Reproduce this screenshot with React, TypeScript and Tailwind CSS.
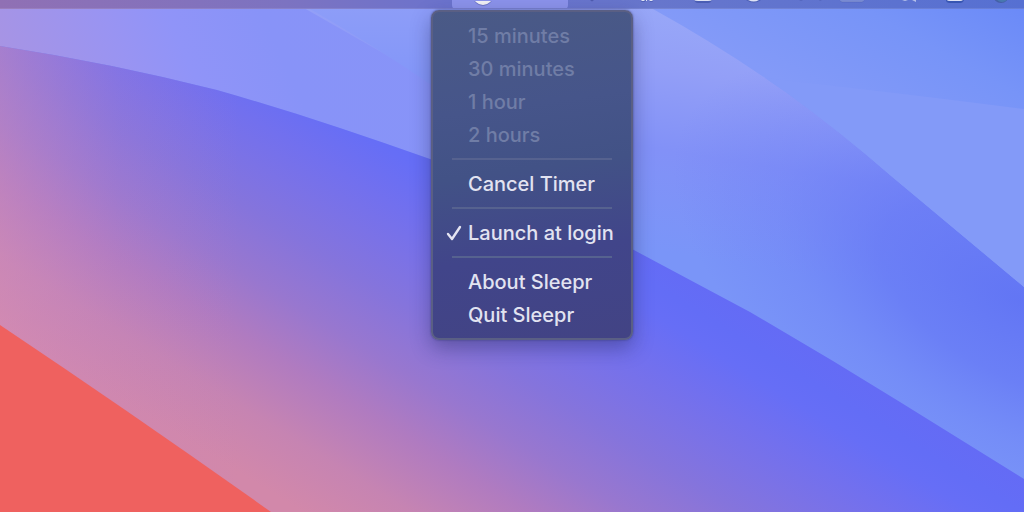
import type { ReactNode } from 'react';

type MenuEntry =
  | { kind: 'item'; label: string; disabled?: boolean; checked?: boolean }
  | { kind: 'separator' };

const entries: MenuEntry[] = [
  { kind: 'item', label: '15 minutes', disabled: true },
  { kind: 'item', label: '30 minutes', disabled: true },
  { kind: 'item', label: '1 hour', disabled: true },
  { kind: 'item', label: '2 hours', disabled: true },
  { kind: 'separator' },
  { kind: 'item', label: 'Cancel Timer' },
  { kind: 'separator' },
  { kind: 'item', label: 'Launch at login', checked: true },
  { kind: 'separator' },
  { kind: 'item', label: 'About Sleepr' },
  { kind: 'item', label: 'Quit Sleepr' },
];

function Wallpaper() {
  return (
    <svg
      className="absolute inset-0 -z-10 h-full w-full"
      viewBox="0 0 1024 512"
      preserveAspectRatio="xMidYMid slice"
      aria-hidden="true"
    >
      <defs>
        <linearGradient id="body" gradientUnits="userSpaceOnUse" x1="0" y1="325" x2="216" y2="-24">
          <stop offset="0" stopColor="#d288aa" />
          <stop offset="0.14" stopColor="#c684b2" />
          <stop offset="0.29" stopColor="#b07bc0" />
          <stop offset="0.42" stopColor="#9877cf" />
          <stop offset="0.56" stopColor="#8574dc" />
          <stop offset="0.66" stopColor="#7b72e6" />
          <stop offset="0.75" stopColor="#7270ee" />
          <stop offset="0.86" stopColor="#666ef6" />
          <stop offset="0.92" stopColor="#636df6" />
          <stop offset="1" stopColor="#646bf5" />
        </linearGradient>
        <linearGradient id="bodyLeft" gradientUnits="userSpaceOnUse" x1="0" y1="0" x2="240" y2="0">
          <stop offset="0" stopColor="#d08cbc" stopOpacity="0.45" />
          <stop offset="0.5" stopColor="#c084cc" stopOpacity="0.15" />
          <stop offset="1" stopColor="#b880d0" stopOpacity="0" />
        </linearGradient>
        <linearGradient id="bandLeft" gradientUnits="userSpaceOnUse" x1="0" y1="50" x2="400" y2="-130">
          <stop offset="0" stopColor="#a794e4" />
          <stop offset="0.25" stopColor="#9994f2" />
          <stop offset="0.38" stopColor="#9094f8" />
          <stop offset="0.58" stopColor="#8893f8" />
          <stop offset="1" stopColor="#8794f8" />
        </linearGradient>
        <linearGradient id="facet" gradientUnits="userSpaceOnUse" x1="400" y1="8" x2="400" y2="80">
          <stop offset="0" stopColor="#8d9df8" />
          <stop offset="1" stopColor="#8396f8" />
        </linearGradient>
        <linearGradient id="bandRight" gradientUnits="userSpaceOnUse" x1="690" y1="0" x2="650" y2="250">
          <stop offset="0" stopColor="#99a9f8" />
          <stop offset="0.28" stopColor="#939ff7" />
          <stop offset="0.6" stopColor="#8291f7" />
          <stop offset="1" stopColor="#7a95f8" />
        </linearGradient>
        <radialGradient
          id="bandDeep"
          gradientUnits="userSpaceOnUse"
          cx="0"
          cy="0"
          r="1"
          gradientTransform="translate(1020 300) rotate(28) scale(380 190)"
        >
          <stop offset="0" stopColor="#6174f4" stopOpacity="0.95" />
          <stop offset="0.4" stopColor="#6476f5" stopOpacity="0.7" />
          <stop offset="0.7" stopColor="#687bf6" stopOpacity="0.3" />
          <stop offset="1" stopColor="#6a7cf6" stopOpacity="0" />
        </radialGradient>
        <linearGradient id="sky" gradientUnits="userSpaceOnUse" x1="780" y1="80" x2="880" y2="-100">
          <stop offset="0" stopColor="#839af8" />
          <stop offset="0.5" stopColor="#7794f8" />
          <stop offset="1" stopColor="#6787f8" />
        </linearGradient>
      </defs>
      <rect width="1024" height="512" fill="url(#bandRight)" />
      <rect width="1024" height="512" fill="url(#bandDeep)" />
      <path
        d="M0 0H290L430 80Q500 130 560 222L430 159Q385 143 340 128Q280 108 217 90Q110 63 0 46Z"
        fill="url(#bandLeft)"
      />
      <path d="M296 0L310 9Q370 43 430 84L500 130V0Z" fill="url(#facet)" />
      <path d="M636 0L653 9Q720 46 787 93Q842 133 890 175L1024 287V0Z" fill="url(#sky)" />
      <path d="M765 78Q900 93 1024 109V287L890 175Q842 133 787 93Z" fill="#839af8" />
      <path
        d="M0 46Q110 63 217 90Q280 108 340 128Q385 143 430 159Q530 198 632 249Q690 280 750 312L833 361L900 402L1024 479V512H0Z"
        fill="url(#body)"
      />
      <path d="M0 46Q110 63 217 90L240 97V512H0Z" fill="url(#bodyLeft)" />
      <path d="M0 325Q136 416 271 512H0Z" fill="#ef615f" />
    </svg>
  );
}

function StatusIcon({ label, className, children }: { label: string; className: string; children: ReactNode }) {
  return (
    <button type="button" aria-label={label} className={`flex h-2 shrink-0 justify-center ${className}`}>
      <svg width="32" height="8" viewBox="0 0 32 8" aria-hidden="true">
        {children}
      </svg>
    </button>
  );
}

function MenuBar() {
  return (
    <header className="flex h-[9px] justify-end overflow-hidden border-b border-white/10 bg-[linear-gradient(90deg,#9070b4_0%,#7c73c1_28%,#6b73cd_44%,#6776cc_64%,#5670d2_100%)]">
      <button
        type="button"
        aria-label="Sleepr"
        aria-expanded="true"
        className="h-[9px] w-[116px] shrink-0 rounded-b-sm bg-[#8b92ea]"
      >
        <svg width="62" height="8" viewBox="0 0 62 8" aria-hidden="true">
          <circle cx="31" cy="-5" r="10" fill="#3f4692" opacity="0.4" />
          <circle cx="31" cy="-6" r="10" fill="#f1f0f4" />
        </svg>
      </button>
      <StatusIcon label="Shortcut" className="w-12">
        <path d="M14 0L16 1.500L18 0Z" fill="#43509f" opacity="0.7" />
      </StatusIcon>
      <StatusIcon label="Pause" className="w-16">
        <path d="M10 0H14L13 2H9ZM17 0H20L21 2H18Z" fill="#2f469c" opacity="0.4" />
        <path d="M10 0H13L12 1H9ZM14 0H15V1H14ZM17 0H20L21 1H18Z" fill="#dfe3f5" />
      </StatusIcon>
      <StatusIcon label="Display" className="w-[46px]">
        <path d="M7 0H25Q24 3 21 3H11Q8 3 7 0Z" fill="#2f469c" opacity="0.5" />
        <path d="M7 0H25Q24 1 21 1H11Q8 1 7 0Z" fill="#dfe3f5" />
      </StatusIcon>
      <StatusIcon label="Clock" className="w-14">
        <path d="M8 0Q16 5 23 0Z" fill="#2f469c" opacity="0.5" />
        <path d="M10 0Q16 3 21 0Z" fill="#dfe3f5" />
      </StatusIcon>
      <StatusIcon label="Bluetooth" className="w-14">
        <path d="M5 0H9L7 1ZM25 0H28L26 1Z" fill="#4a5cae" opacity="0.6" />
      </StatusIcon>
      <StatusIcon label="Battery" className="w-7">
        <path d="M2 0H30Q29 2 27 2H5Q3 2 2 0Z" fill="#41549f" opacity="0.5" />
        <path d="M2 0H30Q29 1 27 1H5Q3 1 2 0Z" fill="#9aaae4" />
      </StatusIcon>
      <StatusIcon label="Search" className="w-[66px] pl-[22px]">
        <path d="M8 0H14L11 1ZM18 0H22V2Z" fill="#b4c0ea" />
      </StatusIcon>
      <StatusIcon label="Control Center" className="w-[46px]">
        <path d="M7 0H25Q24 3 21 3H11Q7 3 7 0Z" fill="#21429c" opacity="0.6" />
        <path d="M8 0H24Q23 1 21 1H11Q8 1 8 0Z" fill="#dfe3f5" />
      </StatusIcon>
      <StatusIcon label="Siri" className="w-[46px]">
        <circle cx="16" cy="-5" r="8" fill="#4560a6" />
        <circle cx="17" cy="-5" r="7" fill="#4878b0" />
      </StatusIcon>
    </header>
  );
}

function CheckMark() {
  return (
    <svg className="h-4 w-4" viewBox="0 0 16 16" fill="none" aria-hidden="true">
      <path
        d="M2 9L6 14L14 2"
        stroke="#e4e4f2"
        strokeWidth="2.4"
        strokeLinecap="round"
        strokeLinejoin="round"
      />
    </svg>
  );
}

export default function App() {
  return (
    <div className="relative isolate min-h-screen overflow-hidden font-['Inter','Liberation_Sans',sans-serif]">
      <Wallpaper />
      <MenuBar />
      <main className="flex justify-center pt-px pl-10">
        <div
          role="menu"
          aria-label="Sleepr"
          className="flex w-[202px] flex-col rounded-lg border-2 border-[#5a5f84] bg-[linear-gradient(172deg,#4a5a86_0%,#46558a_30%,#425286_48%,#41458a_72%,#424384_100%)] bg-origin-border py-[7px] shadow-[0_0_2px_#30366ecc,0_8px_20px_#20205066]"
        >
          {entries.map((entry, i) =>
            entry.kind === 'separator' ? (
              <div key={i} role="separator" className="flex h-4 items-center px-[19px]">
                <div className="h-0.5 w-full bg-[#56628f]" />
              </div>
            ) : (
              <button
                key={i}
                type="button"
                role={entry.checked ? 'menuitemcheckbox' : 'menuitem'}
                aria-checked={entry.checked}
                disabled={entry.disabled}
                className="flex h-[33px] items-center pl-[13px] text-left text-[20px] font-medium whitespace-nowrap text-[#e2e3f1] disabled:text-[#707da6]"
              >
                <span className="w-[22px] shrink-0">{entry.checked && <CheckMark />}</span>
                {entry.label}
              </button>
            ),
          )}
        </div>
      </main>
    </div>
  );
}
